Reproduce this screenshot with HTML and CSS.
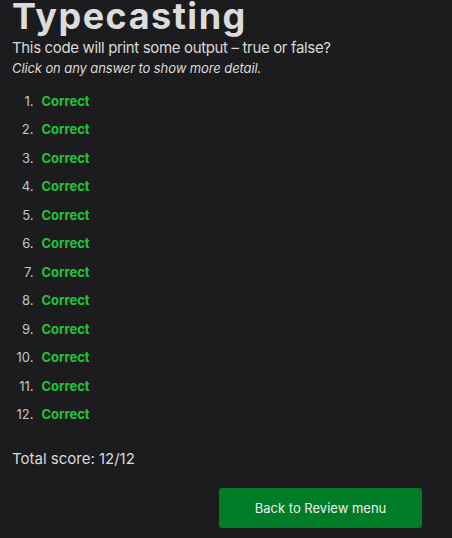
FILE: index.html
```html
<!DOCTYPE html>
<html>
<head>
<meta charset="utf-8">
<link rel="stylesheet" href="styles.css">
</head>
<body>
<main class="page">
  <h1 class="title">Typecasting</h1>
  <p class="subtitle">This code will print some output – true or false?</p>
  <p class="hint">Click on any answer to show more detail.</p>
  <ol class="answers">
    <li><span class="correct">Correct</span></li>
    <li><span class="correct">Correct</span></li>
    <li><span class="correct">Correct</span></li>
    <li><span class="correct">Correct</span></li>
    <li><span class="correct">Correct</span></li>
    <li><span class="correct">Correct</span></li>
    <li><span class="correct">Correct</span></li>
    <li><span class="correct">Correct</span></li>
    <li><span class="correct">Correct</span></li>
    <li><span class="correct">Correct</span></li>
    <li><span class="correct">Correct</span></li>
    <li><span class="correct">Correct</span></li>
  </ol>
  <p class="total">Total score: 12/12</p>
  <div class="actions">
    <button class="back-btn">Back to Review menu</button>
  </div>
</main>
</body>
</html>
```
FILE: styles.css
```css
html, body {
  margin: 0;
  padding: 0;
  background: #1c1c1e;
}
body {
  font-family: Inter, "Noto Sans", sans-serif;
  color: #d9d9d9;
}
.page {
  padding: 0 12px;
}
.title {
  margin: 0;
  font-size: 36px;
  font-weight: 700;
  line-height: 32px;
  letter-spacing: 1.5px;
  color: #dcdcdc;
}
.subtitle {
  margin: 6px 0 0;
  font-size: 15px;
  line-height: 19px;
  letter-spacing: -0.35px;
}
.hint {
  margin: 2px 0 0;
  font-size: 13px;
  line-height: 19px;
  font-style: italic;
  letter-spacing: -0.1px;
}
.answers {
  margin: 8.5px 0 0;
  padding: 0;
  list-style: none;
  counter-reset: item;
  font-size: 13px;
  line-height: 28.5px;
}
.answers li {
  display: flex;
  counter-increment: item;
}
.answers li::before {
  content: counter(item) ".";
  width: 21.5px;
  margin-right: 8px;
  text-align: right;
  color: #c4c4c4;
}
.correct {
  color: #20c43b;
  font-weight: 700;
}
.total {
  margin: 21px 0 0;
  font-size: 15px;
  line-height: 18px;
}
.actions {
  display: flex;
  justify-content: flex-end;
  margin-top: 20.5px;
  padding-right: 18px;
}
.back-btn {
  width: 203px;
  height: 40px;
  border: none;
  border-radius: 3px;
  background: #007b26;
  color: #f0f0f0;
  font-family: Inter, "Noto Sans", sans-serif;
  font-size: 13px;
}
```
